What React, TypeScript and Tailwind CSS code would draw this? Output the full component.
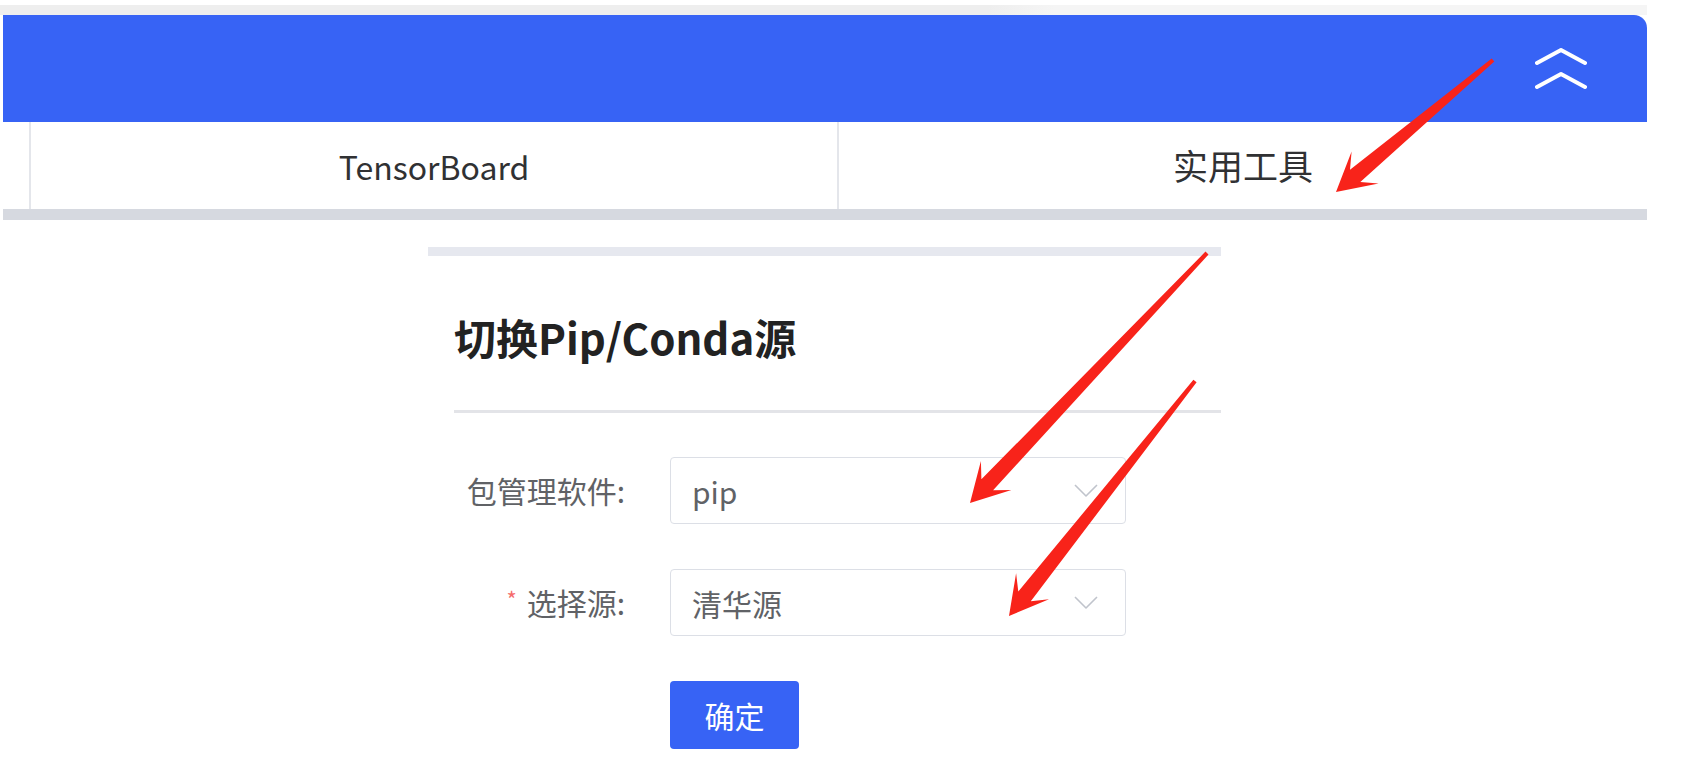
import React from "react";

type Pt = [number, number];

function arrowPoints(tail: Pt, tip: Pt, hl = 38, hw = 21, sw = 8, tw = 2): string {
  const dx = tip[0] - tail[0];
  const dy = tip[1] - tail[1];
  const len = Math.hypot(dx, dy);
  const d: Pt = [dx / len, dy / len];
  const n: Pt = [-d[1], d[0]];
  const B: Pt = [tip[0] - d[0] * hl, tip[1] - d[1] * hl];
  const J: Pt = [tip[0] - d[0] * hl * 0.66, tip[1] - d[1] * hl * 0.66];
  const pts: Pt[] = [
    [tail[0] + n[0] * tw, tail[1] + n[1] * tw],
    [J[0] + n[0] * sw, J[1] + n[1] * sw],
    [B[0] + n[0] * hw, B[1] + n[1] * hw],
    tip,
    [B[0] - n[0] * hw, B[1] - n[1] * hw],
    [J[0] - n[0] * sw, J[1] - n[1] * sw],
    [tail[0] - n[0] * tw, tail[1] - n[1] * tw],
  ];
  return pts.map((p) => `${p[0].toFixed(1)},${p[1].toFixed(1)}`).join(" ");
}

function ChevronDown() {
  return (
    <svg width="24" height="13" viewBox="0 0 24 13" fill="none">
      <polyline points="1,1 12,12 23,1" stroke="#c0c4cc" strokeWidth="1.6" strokeLinejoin="round" />
    </svg>
  );
}

function Select({ value }: { value: string }) {
  return (
    <div className="w-[456px] h-[67px] border border-[#dcdfe6] rounded-[4px] flex items-center justify-between pl-[21px] pr-[27px] bg-white">
      <span className="text-[30px] text-[#606266] leading-none">{value}</span>
      <ChevronDown />
    </div>
  );
}

export default function App() {
  const font = { fontFamily: '"Noto Sans CJK SC", "Noto Sans", sans-serif' };
  return (
    <div className="relative w-[1681px] h-[777px] bg-white overflow-hidden" style={font}>
      {/* top strip */}
      <div className="h-[15px] pt-[5px]">
        <div className="w-[1647px] h-[10px] bg-[linear-gradient(to_right,#eeeeee_60%,#f5f5f5_64%)]" />
      </div>

      {/* header */}
      <div className="ml-[3px] w-[1644px]">
        <div className="h-[107px] bg-[#3763f5] rounded-tr-[13px] flex items-center justify-end pr-[60px]">
          <svg width="52" height="42" viewBox="0 0 52 42" fill="none">
            <polyline points="2,15 26,2 50,15" stroke="white" strokeWidth="4" strokeLinejoin="round" strokeLinecap="round" />
            <polyline points="2,39 26,26 50,39" stroke="white" strokeWidth="4" strokeLinejoin="round" strokeLinecap="round" />
          </svg>
        </div>
        <div className="h-[87px] flex bg-white">
          <div className="w-[28px] border-r-2 border-[#e4e6eb]" />
          <div className="w-[808px] border-r-2 border-[#e4e6eb] flex items-center justify-center text-[32px] text-[#303133]">
            TensorBoard
          </div>
          <div className="flex-1 flex items-center justify-center text-[35px] text-[#303133]">实用工具</div>
        </div>
        <div className="h-[11px] bg-[#d6d9e0]" />
      </div>

      {/* panel */}
      <div className="ml-[428px] mt-[27px] w-[793px]">
        <div className="h-[9px] bg-[#e6e8ef]" />
        <div className="pl-[26px]">
          <div className="mt-[51px] h-[60px] flex items-center text-[42px] font-bold text-[#222222] leading-none">
            切换Pip/Conda源
          </div>
          <div className="mt-[43px] h-[3px] bg-[#e3e4e8]" />
          <div className="mt-[44px] flex flex-col gap-[45px]">
            <div className="flex items-center">
              <div className="w-[216px] pr-[45px] text-right text-[30px] text-[#606266]">包管理软件:</div>
              <Select value="pip" />
            </div>
            <div className="flex items-center">
              <div className="w-[216px] pr-[45px] flex justify-end items-center text-[30px] text-[#606266]">
                <span className="text-[#f56c6c] text-[22px] mr-[10px] -mt-[8px]">*</span>
                <span>选择源:</span>
              </div>
              <Select value="清华源" />
            </div>
            <div className="flex">
              <div className="w-[216px]" />
              <button className="w-[129px] h-[68px] bg-[#3763f5] rounded-[4px] text-white text-[30px] flex items-center justify-center">
                确定
              </button>
            </div>
          </div>
        </div>
      </div>

      {/* red arrows overlay */}
      <svg className="absolute inset-0 pointer-events-none" width="1681" height="777" viewBox="0 0 1681 777">
        <polygon points={arrowPoints([1493, 60], [1336, 192])} fill="#f8231a" />
        <polygon points={arrowPoints([1207, 253], [970, 503])} fill="#f8231a" />
        <polygon points={arrowPoints([1195, 381], [1009, 616])} fill="#f8231a" />
      </svg>
    </div>
  );
}
